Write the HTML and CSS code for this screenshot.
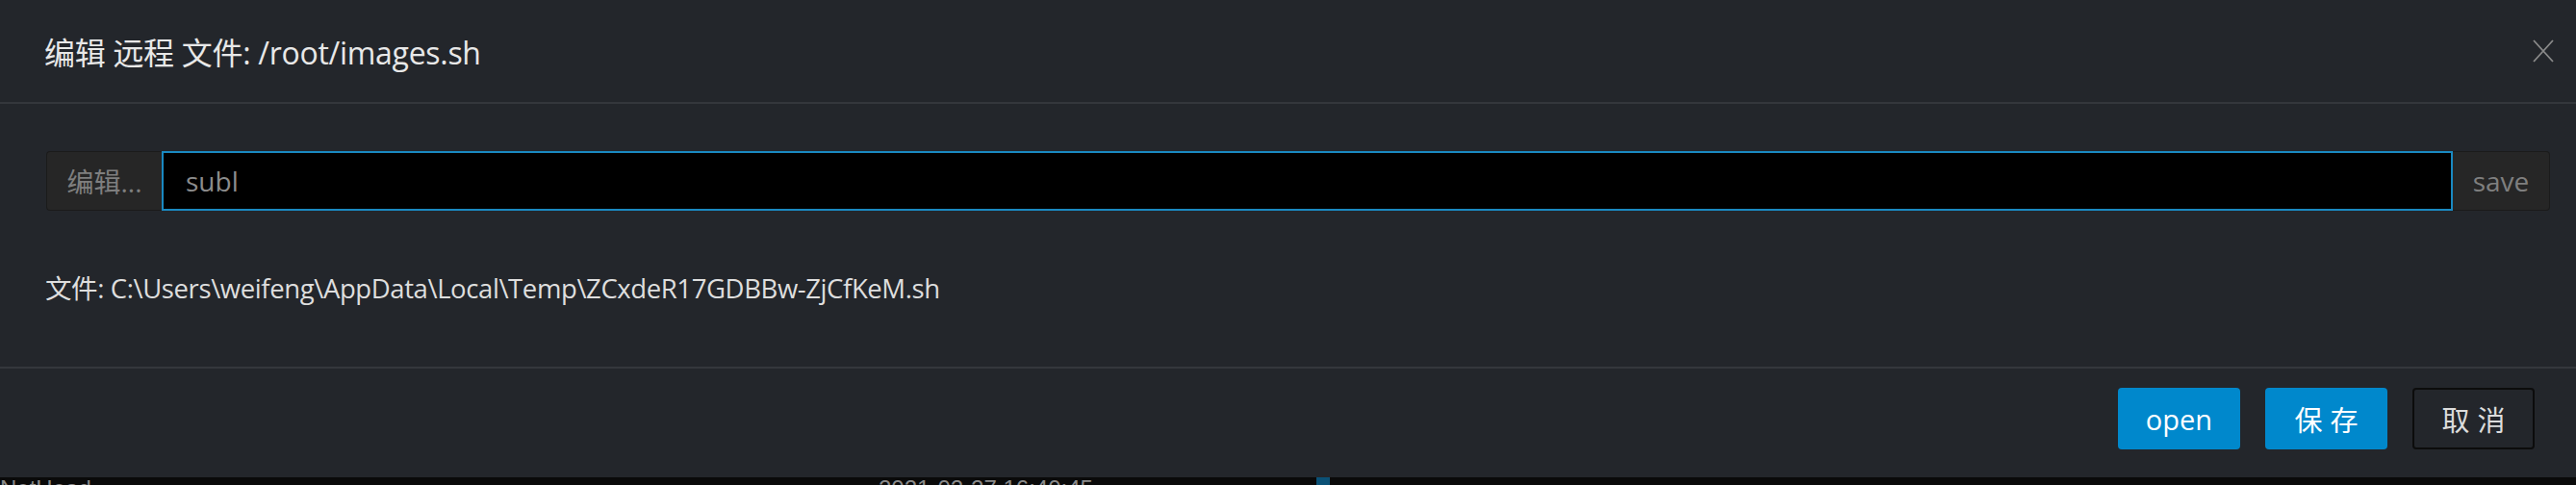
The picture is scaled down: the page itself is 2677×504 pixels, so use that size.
FILE: index.html
```html
<!DOCTYPE html>
<html lang="zh">
<head>
<meta charset="utf-8">
<title>编辑 远程 文件</title>
<link rel="stylesheet" href="styles.css">
</head>
<body>
<div class="page">
  <div class="dialog">
    <div class="header">
      <h4 class="title">编辑 远程 文件: /root/images.sh</h4>
      <button class="close" aria-label="close">
        <svg width="22" height="24" viewBox="0 0 22 24"><path d="M1 1 L21 23 M21 1 L1 23" stroke="#8a8a8a" stroke-width="1.8" fill="none"/></svg>
      </button>
    </div>
    <div class="body">
      <div class="input-group">
        <span class="addon addon-left">编辑...</span>
        <input class="cmd" type="text" value="subl">
        <span class="addon addon-right">save</span>
      </div>
      <p class="file">文件: C:\Users\weifeng\AppData\Local\Temp\ZCxdeR17GDBBw-ZjCfKeM.sh</p>
    </div>
    <div class="footer">
      <button class="btn btn-primary">open</button>
      <button class="btn btn-primary cjk">保存</button>
      <button class="btn btn-default cjk">取消</button>
    </div>
  </div>
  <div class="statusbar">
    <span class="status-name">NetHead</span>
    <span class="status-date">2021-02-27 16:40:45</span>
    <span class="status-bar-blue"></span>
  </div>
</div>
</body>
</html>
```
FILE: styles.css
```css
html, body {
  margin: 0;
  padding: 0;
  background: #0a0a0a;
}
body {
  width: 2677px;
  height: 504px;
  overflow: hidden;
  font-family: "Open Sans", "Noto Sans CJK SC", sans-serif;
}
.page {
  display: flex;
  flex-direction: column;
  height: 504px;
}
.dialog {
  background: #23262b;
  height: 496px;
  display: flex;
  flex-direction: column;
}
.header {
  height: 106px;
  border-bottom: 2px solid #34373c;
  display: flex;
  align-items: center;
  justify-content: space-between;
  padding: 0 23px 0 46px;
}
.title {
  margin: 0;
  font-size: 32px;
  font-weight: 400;
  color: #e8e8e8;
  letter-spacing: -0.3px;
}
.close {
  background: none;
  border: 0;
  padding: 0;
  width: 22px;
  height: 24px;
  display: flex;
}
.body {
  height: 273px;
  padding: 49px 27px 0 48px;
  box-sizing: border-box;
}
.input-group {
  display: flex;
  height: 62px;
}
.addon {
  box-sizing: border-box;
  background: #262626;
  border: 1px solid #1b1b1b;
  color: #7f7f7f;
  font-size: 28px;
  display: flex;
  align-items: center;
  justify-content: center;
}
.addon-left {
  width: 120px;
  border-radius: 4px 0 0 4px;
  border-right: 0;
}
.addon-right {
  width: 101px;
  border-radius: 0 4px 4px 0;
  border-left: 0;
}
.cmd {
  flex: 1;
  min-width: 0;
  box-sizing: border-box;
  height: 62px;
  margin: 0;
  background: #000;
  border: 2px solid #1a89c1;
  color: #8c8c8c;
  font-family: "Open Sans", "Noto Sans CJK SC", sans-serif;
  font-size: 28px;
  padding: 0 0 0 23px;
  outline: none;
}
.file {
  margin: 61px 0 0 -1px;
  font-size: 27.5px;
  line-height: 40px;
  color: #dedede;
  letter-spacing: -0.4px;
}
.footer {
  flex: 1;
  border-top: 2px solid #34373c;
  display: flex;
  justify-content: flex-end;
  align-items: flex-start;
  gap: 26px;
  padding: 20px 43px 0 0;
}
.btn {
  box-sizing: border-box;
  width: 127px;
  height: 64px;
  border-radius: 4px;
  font-family: "Open Sans", "Noto Sans CJK SC", sans-serif;
  font-size: 29px;
  padding: 0;
  display: flex;
  align-items: center;
  justify-content: center;
}
.btn-primary {
  background: #0088cc;
  border: 0;
  color: #ffffff;
}
.btn-default {
  background: #23262b;
  border: 2px solid #0c0c0c;
  color: #dcdcdc;
}
.cjk {
  letter-spacing: 8px;
  text-indent: 8px;
}
.statusbar {
  height: 8px;
  overflow: hidden;
  font-family: "Liberation Sans", sans-serif;
  font-size: 24px;
  line-height: 24px;
  color: #8a8a8a;
  display: flex;
}
.status-name {
  width: 913px;
}
.status-date {
  width: 455px;
}
.status-bar-blue {
  width: 14px;
  height: 8px;
  background: #0b5176;
}
```
